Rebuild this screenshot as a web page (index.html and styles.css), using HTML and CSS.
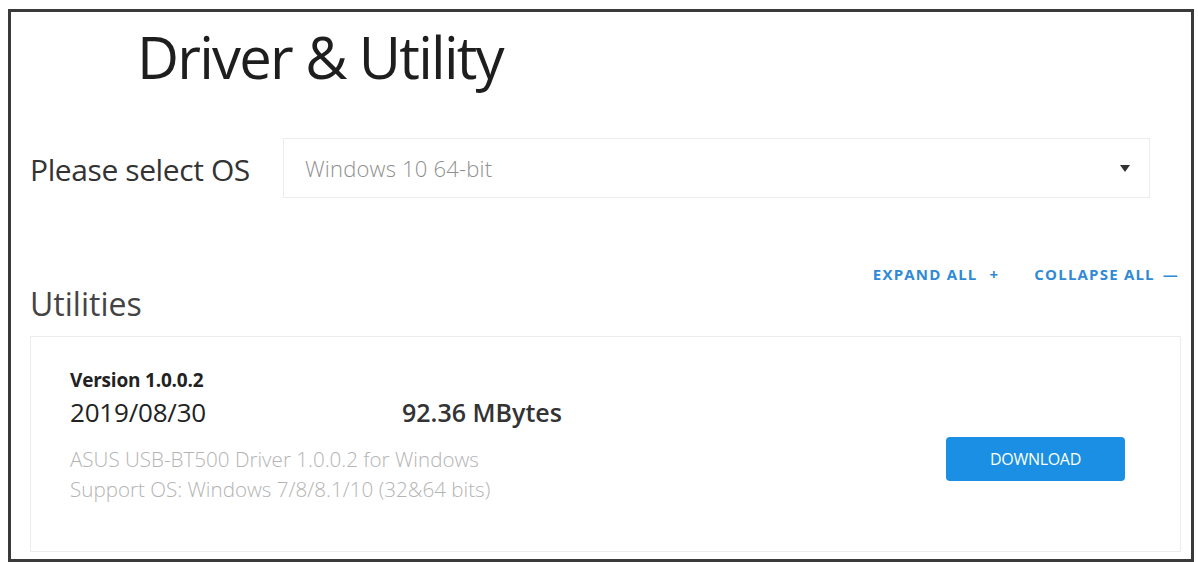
FILE: index.html
```html
<!DOCTYPE html>
<html>
<head>
<meta charset="utf-8">
<link rel="stylesheet" href="styles.css">
</head>
<body>
<div class="frame">
  <h1 class="title">Driver &amp; Utility</h1>
  <div class="os-row">
    <div class="os-label">Please select OS</div>
    <div class="select">
      <span class="select-text">Windows 10 64-bit</span>
      <span class="caret"></span>
    </div>
  </div>
  <div class="section-head">
    <div class="section-title">Utilities</div>
    <div class="actions">
      <span class="action">EXPAND ALL<span class="sym plus">+</span></span>
      <span class="action">COLLAPSE ALL<span class="sym dash">&mdash;</span></span>
    </div>
  </div>
  <div class="card">
    <div class="card-info">
      <div class="version">Version 1.0.0.2</div>
      <div class="meta">
        <span class="date">2019/08/30</span>
        <span class="size">92.36 MBytes</span>
      </div>
      <div class="desc">ASUS USB-BT500 Driver 1.0.0.2 for Windows</div>
      <div class="desc">Support OS: Windows 7/8/8.1/10 (32&amp;64 bits)</div>
    </div>
    <div class="card-action">
      <button class="download">DOWNLOAD</button>
    </div>
  </div>
</div>
</body>
</html>
```
FILE: styles.css
```css
html, body {
  margin: 0;
  padding: 0;
  background: #ffffff;
}
body {
  font-family: "Open Sans", "Noto Sans", sans-serif;
  color: #222;
}
.frame {
  box-sizing: border-box;
  margin: 9px 0 0 8px;
  width: 1186px;
  height: 553px;
  border: 3px solid #3a3a3a;
  padding: 0 12px 0 19px;
  display: flex;
  flex-direction: column;
}
.title {
  margin: 13px 0 0 107px;
  font-weight: 400;
  font-size: 58px;
  line-height: 64px;
  color: #1e1e1e;
  letter-spacing: -1.8px;
}
.os-row {
  display: flex;
  align-items: center;
  margin-top: 49px;
}
.os-label {
  font-size: 30px;
  color: #333;
  width: 253px;
  flex: none;
  letter-spacing: -0.4px;
  margin-top: 2px;
}
.select {
  box-sizing: border-box;
  width: 867px;
  height: 60px;
  border: 1px solid #ececec;
  display: flex;
  align-items: center;
  justify-content: space-between;
  padding: 0 19px 0 21px;
}
.select-text {
  font-size: 22px;
  font-weight: 300;
  color: #8f8f8f;
  letter-spacing: 0.2px;
}
.caret {
  width: 0;
  height: 0;
  border-left: 5px solid transparent;
  border-right: 5px solid transparent;
  border-top: 7px solid #333;
}
.section-head {
  display: flex;
  justify-content: space-between;
  align-items: flex-start;
  margin-top: 66px;
}
.section-title {
  font-size: 32px;
  color: #444;
  line-height: 40px;
  margin-top: 20px;
}
.actions {
  display: flex;
  gap: 35px;
}
.action {
  font-size: 15px;
  font-weight: 700;
  color: #2f8ad6;
  letter-spacing: 1.2px;
  line-height: 20px;
}
.sym {
  font-weight: 700;
}
.plus {
  margin-left: 12px;
}
.dash {
  margin-left: 8px;
}
.card {
  margin-top: 12px;
  box-sizing: border-box;
  width: 1151px;
  height: 216px;
  border: 1px solid #ececec;
  display: flex;
  justify-content: space-between;
  align-items: flex-start;
  padding: 30px 55px 0 39px;
}
.card-info {
  display: flex;
  flex-direction: column;
}
.version {
  font-size: 19px;
  line-height: 26px;
  font-weight: 700;
  color: #222;
  letter-spacing: -0.2px;
  margin-bottom: 3px;
}
.meta {
  display: flex;
  line-height: 32px;
  color: #222;
  margin-bottom: 16px;
}
.date {
  width: 332px;
  font-size: 26px;
  letter-spacing: -0.2px;
}
.size {
  font-size: 25px;
  font-weight: 600;
  color: #333;
}
.desc {
  font-size: 20.6px;
  color: #b4b4b4;
  line-height: 30px;
  font-weight: 300;
}
.card-action {
  margin-top: 70px;
}
.download {
  width: 179px;
  height: 44px;
  border: none;
  border-radius: 4px;
  background: #1a8fe3;
  color: #ffffff;
  font-family: "Open Sans", "Noto Sans", sans-serif;
  font-size: 16px;
  letter-spacing: -0.3px;
  display: block;
}
```
